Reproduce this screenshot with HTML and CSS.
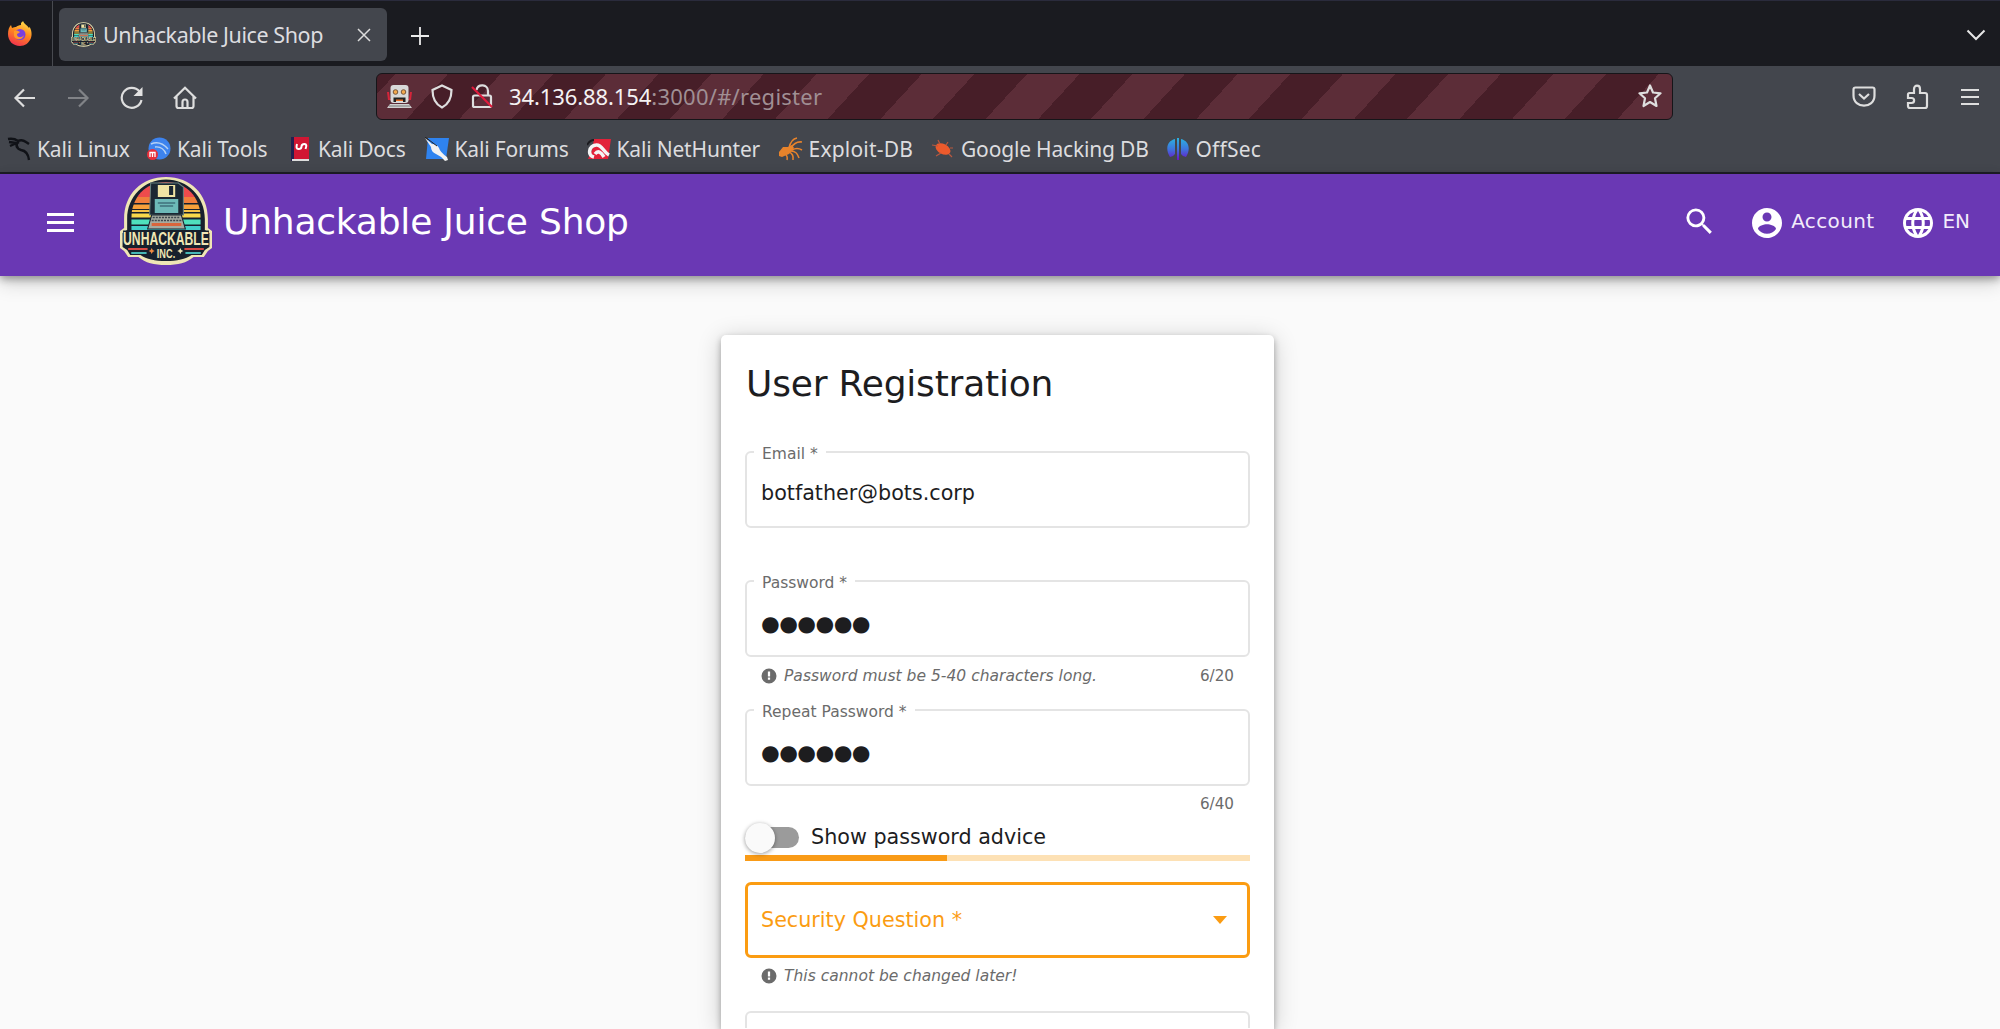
FILE: index.html
```html
<!DOCTYPE html>
<html lang="en">
<head>
<meta charset="utf-8">
<title>Unhackable Juice Shop</title>
<link rel="stylesheet" href="styles.css">
</head>
<body>
<svg width="0" height="0" class="defs">
  <defs>
    <linearGradient id="fox" x1="0.7" y1="0" x2="0.3" y2="1"><stop offset="0" stop-color="#ffe14d"/><stop offset=".45" stop-color="#ff8a1e"/><stop offset="1" stop-color="#f2304f"/></linearGradient>
    <linearGradient id="off" x1="0" y1="0" x2="0" y2="1"><stop offset="0" stop-color="#2bb3e0"/><stop offset=".5" stop-color="#3d76dd"/><stop offset="1" stop-color="#6a12c9"/></linearGradient>
    <clipPath id="dome"><path d="M11 64V42C11 20 25 5 45 5s34 15 34 37v22z"/></clipPath>
    <symbol id="logo" viewBox="0 0 90 88">
      <path d="M45 0C21 0 4 17 4 42v9l-4 3v17l4 3 4 6h10c7 6 15 8 27 8s20-2 27-8h10l4-6 4-3V54l-4-3v-9C86 17 69 0 45 0z" fill="#efe6b5"/>
      <path d="M45 2.500C24 2.500 7 19 7 42v11l-4.500 3v14l4.500 3 3 5h10c6 4 14 6 25 6s19-2 25-6h10l3-5 4.500-3V56L83 53V42C83 19 66 2.500 45 2.500z" fill="#17202d"/>
      <g clip-path="url(#dome)">
        <path d="M8 4h74v16H8z" fill="#ee4b4c"/><path d="M8 20h74v6H8z" fill="#f07f3c"/><path d="M8 27.500h74v4.500H8z" fill="#f6a03a"/><path d="M8 33h74v2H8z" fill="#f4c348"/><path d="M8 36.500h74v4H8z" fill="#f8d84b"/><path d="M8 42.500h74v5H8z" fill="#4fe0bd"/><path d="M8 49h74v4H8z" fill="#41cfca"/><path d="M8 54h74v8H8z" fill="#35b2cf"/>
      </g>
      <path d="M30 6h27l5 4v28H29z" fill="#1b2733" stroke="#68827f" stroke-width="1"/>
      <path d="M37 8h17v12H37z" fill="#efe3a4"/><path d="M48 9h4v9h-4z" fill="#1b2733"/>
      <path d="M34 22h23v14H34z" fill="#6db9b8"/><path d="M37 26h17M39 29h13" stroke="#284d5c"/>
      <path d="M31 38h29l4 14H27z" fill="#a5aaa0" stroke="#17202d"/><path d="M32 40.500h27M31 43.500h29" stroke="#3d474e" stroke-width="1.500" stroke-dasharray="2 1"/><path d="M31 47.500h29" stroke="#d9653c" stroke-width="3"/>
      <path d="M3 53.500h84v16H3z" fill="#17202d"/>
      <text class="logo-word" x="3" y="68.500" textLength="84" lengthAdjust="spacingAndGlyphs">UNHACKABLE</text>
      <path d="M8 72h19M63 72h19" stroke="#d94a45" stroke-width="2"/><path d="M11 76h15M64 76h15" stroke="#47b7b6" stroke-width="2"/>
      <path d="M31 71l1 2 2 1-2 1-1 2-1-2-2-1 2-1z" fill="#ef8a42"/><path d="M59 71l1 2 2 1-2 1-1 2-1-2-2-1 2-1z" fill="#efe6b5"/>
      <text class="logo-inc" x="36" y="81" textLength="18" lengthAdjust="spacingAndGlyphs">INC.</text>
    </symbol>
    <symbol id="info" viewBox="0 0 24 24"><path fill="currentColor" d="M12 2a10 10 0 100 20 10 10 0 000-20zm1.500 15h-3v-3h3zm0-4.500h-3V6h3z"/></symbol>
  </defs>
</svg>

<div class="tabs">
  <div class="pinned"><svg width="26" height="26" viewBox="0 0 26 26"><path d="M14 2c1-1 2-2 2-2 1 3 4 4 6 7 0 0 1-1 0-2 3 4 3 9 2 12-2 5-6 8-11 8C6 25 1 20 1 13 1 9 2 6 4 4l1 3c2-1 3-1 4-1 1-1 3-2 5-2z" fill="url(#fox)"/><circle cx="13" cy="13.500" r="5.500" fill="#7a3fe0"/><path d="M7 10c3-1 4 0 6 1 0 1-3 1-3 3 1 3 5 3 7 0-1 5-8 6-10 1z" fill="#ff9a2a"/></svg></div>
  <div class="tab">
    <svg width="25" height="25"><use href="#logo"/></svg>
    <span class="tab-title">Unhackable Juice Shop</span>
    <svg class="tab-close" width="14" height="14" viewBox="0 0 14 14"><path d="M1 1l12 12M13 1L1 13" stroke="#dcdcdc" stroke-width="1.500"/></svg>
  </div>
  <svg class="plus" width="18" height="18" viewBox="0 0 18 18"><path d="M9 0v18M0 9h18" stroke="#ececec" stroke-width="1.800"/></svg>
  <svg class="chev" width="20" height="12" viewBox="0 0 20 12"><path d="M1.500 1.500L10 10l8.500-8.500" fill="none" stroke="#e6e6e6" stroke-width="2"/></svg>
</div>

<div class="toolbar">
  <nav class="nav">
    <svg width="24" height="24" viewBox="0 0 24 24"><path d="M22 12H2M11 3.500L2.500 12l8.500 8.500" class="ln"/></svg>
    <svg class="dim" width="24" height="24" viewBox="0 0 24 24"><path d="M2 12h20M13 3.500l8.500 8.500-8.500 8.500" class="ln"/></svg>
    <svg width="24" height="24" viewBox="0 0 24 24"><path d="M21.500 14A10 10 0 1 1 19.500 5.500" class="ln"/><path d="M22.500 1v9h-9z" fill="#e2e2e2"/></svg>
    <svg width="24" height="24" viewBox="0 0 24 24"><path d="M1 12.500L12 1.800l11 10.700M3.500 10.500V20q0 2 2 2h13q2 0 2-2v-9.500M9.500 22v-6q0-2.500 2.500-2.500t2.500 2.500v6" class="ln"/></svg>
  </nav>
  <div class="urlbar">
    <svg width="25" height="25" viewBox="0 0 25 25"><path d="M0 8h2l1 7h19l1-7h2l-1 8H1z" fill="#d5253a"/><rect x="3.500" y="1" width="18" height="18" rx="3" fill="#d9d9d9"/><circle cx="8.500" cy="8" r="2.300" fill="#f3a84c" stroke="#77563a" stroke-width="1"/><circle cx="16.500" cy="8" r="2.300" fill="#f3a84c" stroke="#77563a" stroke-width="1"/><path d="M6.500 18v-4.500h12V18h-2.500v-2H9v2z" fill="#222"/><path d="M9 15.500h7v1.500H9z" fill="#e66b25"/><path d="M3 20h19l3 4H0z" fill="#d0d0d0"/><path d="M2 22h21" stroke="#777"/></svg>
    <svg width="22" height="25" viewBox="0 0 22 25"><path d="M11 1.500L20.500 6c0 8-2.500 14-9.500 17.500C4 20 1.500 14 1.500 6z" class="ln"/></svg>
    <svg width="22" height="25" viewBox="0 0 22 25"><path d="M3.500 11.500h15q1.500 0 1.500 1.500v8.500q0 1.500-1.500 1.500h-15q-1.500 0-1.500-1.500V13q0-1.500 1.500-1.500M17 11.500V7c0-7-10-7.500-11.500-1" class="ln"/><path d="M1 3l20 20" stroke="#e21b3c" stroke-width="2.200"/></svg>
    <span class="url"><span class="host">34.136.88.154</span><span class="path">:3000/#/register</span></span>
    <svg class="star" width="24" height="24" viewBox="0 0 24 24"><path d="M12 1.500l3 7 7.500.8-5.500 5 1.500 7.700-6.500-4-6.500 4L7 14.300l-5.500-5L9 8.500z" class="ln" stroke-linejoin="round"/></svg>
  </div>
  <div class="right-icons">
    <svg width="24" height="22" viewBox="0 0 24 22"><path d="M3.500 1.500h17q2 0 2 2v6c0 13.500-21 13.500-21 0v-6q0-2 2-2zM7 8l5 4.500L17 8" class="ln"/></svg>
    <svg width="24" height="26" viewBox="0 0 24 26"><path d="M3.500 9H8V5c0-4.500 6-4.500 6 0v4h5q2 0 2 2v11q0 2-2 2H4q-2 0-2-2v-3h3.500c3.500 0 3.500-5 0-5H2v-3.500q0-1.500 1.500-1.500" class="ln"/></svg>
    <svg width="20" height="18" viewBox="0 0 20 18"><path d="M1 2h18M1 9h18M1 16h18" class="ln"/></svg>
  </div>
</div>

<div class="bookmarks">
  <a><svg width="24" height="24" viewBox="0 0 24 24"><path d="M1 2q6-1 10 2 4-2 8 1l3 2M2 5l7 1M3 9l7-3q-2 5 4 7 7 1 8 10M12 5q-4 2-1 6" fill="none" stroke="#101217" stroke-width="2.400"/></svg><span>Kali Linux</span></a>
  <a><svg width="24" height="24" viewBox="0 0 24 24"><circle cx="12.500" cy="11.500" r="11" fill="#3d83ee"/><path d="M4 7q9-4 17 5M8 10q8-1 11 7" fill="none" stroke="#b6d2f5" stroke-width="1.400"/><circle cx="5.500" cy="17.500" r="5.500" fill="#e72f3b"/><path d="M3 20v-4.500h5V20M5.500 15.500V20" fill="none" stroke="#fff" stroke-width="1.300"/></svg><span>Kali Tools</span></a>
  <a><svg width="24" height="24" viewBox="0 0 24 24"><path d="M3 0h18v24H3z" fill="#d01633"/><path d="M3 0h3v24H3z" fill="#24204f"/><path d="M4 22h17v2H4z" fill="#ddd"/><path d="M9 7q-1.500 5 1.500 5t3-2.500 3-2.500 1 5" fill="none" stroke="#fff" stroke-width="2"/></svg><span>Kali Docs</span></a>
  <a><svg width="24" height="24" viewBox="0 0 24 24"><path d="M3 1h21l-3 21H1z" fill="#2f83ef"/><path d="M0 1l7 6q5 0 7 4 1 4 8 9l1 3-3 1q-4-5-9-7-5-2-5-7z" fill="#f2f2f2"/><path d="M0 0l12 9" stroke="#222"/></svg><span>Kali Forums</span></a>
  <a><svg width="24" height="24" viewBox="0 0 24 24"><path d="M7 2h17l-3 20H1l4-9z" fill="#e22139"/><path d="M7 20C0 18 2 9 9 8c6-1 7 7 13 10M8 17c3-4 6-2 9 3" fill="none" stroke="#f4f4f4" stroke-width="3.500"/><path d="M0 8q3-5 7-5" stroke="#1b1b1f" stroke-width="2" fill="none"/></svg><span>Kali NetHunter</span></a>
  <a class="wide"><svg width="24" height="24" viewBox="0 0 24 24"><path d="M0 15l4-5 5 0 4-2 2 3-5 6-7 3-3-1z" fill="#e8832b"/><path d="M10 11Q12 2 18 1M12 11q4-7 11-6M13 13q5-3 10 0M12 14q6 0 8 7M10 15q5 2 4 8M6 17q3 2 2 6" fill="none" stroke="#e8832b" stroke-width="1.500"/></svg><span>Exploit-DB</span></a>
  <a><svg width="24" height="24" viewBox="0 0 24 24"><ellipse cx="12" cy="12" rx="8" ry="5" fill="#ec5a2c" transform="rotate(28 12 12)"/><path d="M1 8l6 1M9 7L7 3M15 8l2-3M19 11h3M18 17l3 3M10 16l-5 3" stroke="#b9583f" stroke-width="1.200"/></svg><span>Google Hacking DB</span></a>
  <a class="wide"><svg width="24" height="24" viewBox="0 0 24 24"><path d="M9 2C1 4-1 12 4 20q3 0 5-3zM15 2c8 2 10 10 5 18q-3 0-5-3zM11 1h2v22h-2z" fill="url(#off)"/></svg><span>OffSec</span></a>
</div>

<header class="header">
  <svg class="menu" width="27" height="19" viewBox="0 0 27 19"><path d="M0 1.500h27M0 9.500h27M0 17.500h27" stroke="#fff" stroke-width="3"/></svg>
  <svg class="logo" width="92" height="88" viewBox="0 0 90 88" preserveAspectRatio="none"><use href="#logo" width="90" height="88"/></svg>
  <span class="brand">Unhackable Juice Shop</span>
  <svg class="search" width="35" height="35" viewBox="0 0 24 24"><path fill="#fff" d="M15.500 14h-.79l-.28-.27A6.471 6.471 0 0 0 16 9.500 6.500 6.500 0 1 0 9.500 16c1.610 0 3.090-.59 4.230-1.570l.27.28v.79l5 4.990L20.490 19l-4.990-5zm-6 0C7.010 14 5 11.990 5 9.500S7.010 5 9.500 5 14 7.010 14 9.500 11.990 14 9.500 14z"/></svg>
  <span class="action account"><svg width="36" height="36" viewBox="0 0 24 24"><path fill="#fff" d="M12 2C6.480 2 2 6.480 2 12s4.480 10 10 10 10-4.480 10-10S17.520 2 12 2zm0 3c1.660 0 3 1.340 3 3s-1.340 3-3 3-3-1.340-3-3 1.340-3 3-3zm0 14.200a7.200 7.200 0 0 1-6-3.220c.03-1.990 4-3.080 6-3.080 1.990 0 5.970 1.090 6 3.080a7.200 7.200 0 0 1-6 3.220z"/></svg><span>Account</span></span>
  <span class="action"><svg width="36" height="36" viewBox="0 0 24 24"><path fill="#fff" d="M11.990 2C6.470 2 2 6.480 2 12s4.470 10 9.990 10C17.520 22 22 17.520 22 12S17.520 2 11.990 2zm6.930 6h-2.950a15.650 15.650 0 0 0-1.380-3.560A8.030 8.030 0 0 1 18.920 8zM12 4.040c.83 1.200 1.480 2.530 1.910 3.960h-3.820c.43-1.430 1.080-2.760 1.910-3.960zM4.260 14C4.100 13.360 4 12.690 4 12s.1-1.360.26-2h3.380c-.08.66-.14 1.320-.14 2s.06 1.340.14 2H4.260zm.82 2h2.950c.32 1.250.78 2.450 1.380 3.560A7.987 7.987 0 0 1 5.080 16zm2.950-8H5.080a7.987 7.987 0 0 1 4.330-3.560A15.650 15.650 0 0 0 8.030 8zM12 19.960c-.83-1.200-1.480-2.530-1.910-3.960h3.820c-.43 1.430-1.080 2.760-1.910 3.960zM14.340 14H9.660c-.09-.66-.16-1.320-.16-2s.07-1.350.16-2h4.680c.09.65.16 1.320.16 2s-.07 1.340-.16 2zm.25 5.560c.6-1.110 1.060-2.310 1.380-3.560h2.950a8.030 8.030 0 0 1-4.330 3.560zM16.360 14c.08-.66.14-1.320.14-2s-.06-1.340-.14-2h3.380c.16.640.26 1.310.26 2s-.1 1.360-.26 2h-3.380z"/></svg><span class="lang">EN</span></span>
</header>

<main class="page">
  <section class="card">
    <h1>User Registration</h1>
    <div class="field"><label>Email *</label><span class="value">botfather@bots.corp</span></div>
    <div class="hint empty"></div>
    <div class="field"><label>Password *</label><span class="value dots">●●●●●●</span></div>
    <div class="hint"><svg width="18" height="18"><use href="#info"/></svg><em>Password must be 5-40 characters long.</em><span class="count">6/20</span></div>
    <div class="field"><label>Repeat Password *</label><span class="value dots">●●●●●●</span></div>
    <div class="hint short"><span class="count">6/40</span></div>
    <div class="toggle-row"><span class="toggle"><span class="thumb"></span></span><span class="toggle-label">Show password advice</span></div>
    <div class="strength"><div class="strength-fill"></div></div>
    <div class="field select"><span class="value">Security Question *</span><svg width="14" height="8" viewBox="0 0 14 8"><path d="M0 0h14L7 8z" fill="#fb9c12"/></svg></div>
    <div class="hint last"><svg width="18" height="18"><use href="#info"/></svg><em>This cannot be changed later!</em></div>
    <div class="field cut"></div>
  </section>
</main>
</body>
</html>
```
FILE: styles.css
```css
* { box-sizing: border-box; }
body {
  margin: 0;
  height: 1029px;
  overflow: hidden;
  background: #fafafa;
  font-family: "DejaVu Sans", sans-serif;
  color: #1d1d1f;
}
svg { display: block; flex: none; }
.defs { position: absolute; }
.ln { fill: none; stroke: #dedede; stroke-width: 2.2; }
.logo-word { font: bold 18px "Liberation Sans", sans-serif; fill: #efe6b5; }
.logo-inc { font: bold 12px "Liberation Sans", sans-serif; fill: #efe6b5; }

/* Browser tab strip */
.tabs {
  display: flex;
  align-items: center;
  height: 66px;
  background: #1a1b20;
  border-top: 1px solid #2a2b3c;
  font-family: "Noto Sans", sans-serif;
}
.pinned {
  display: flex;
  align-items: center;
  width: 53px;
  height: 100%;
  padding-left: 7px;
  border-right: 1px solid #484a50;
}
.tab {
  display: flex;
  align-items: center;
  width: 328px;
  height: 53px;
  margin: 2px 0 0 6px;
  padding: 0 16px 0 12px;
  border-radius: 6px;
  background: #43464d;
}
.tab-title { margin-left: 7px; font-size: 21.5px; letter-spacing: -.42px; color: #dddde0; white-space: nowrap; }
.tab-close { margin-left: auto; }
.plus { margin: 4px 0 0 24px; }
.chev { margin: 3px 14px 0 auto; }

/* Navigation toolbar */
.toolbar {
  display: flex;
  align-items: center;
  height: 60px;
  background: #43464d;
  font-family: "Noto Sans", sans-serif;
}
.nav { display: flex; gap: 29.3px; width: 376px; padding-left: 13px; padding-top: 3px; }
.dim { opacity: .4; }
.urlbar {
  display: flex;
  align-items: center;
  width: 1297px;
  height: 47px;
  padding: 0 10px 0 10px;
  border: 1px solid #161519;
  border-radius: 6px;
  background: repeating-linear-gradient(132.6deg, #471e28 0, #471e28 13.5px, #5c2d38 13.5px, #5c2d38 52.2px, #471e28 52.2px, #471e28 77.5px);
}
.urlbar svg + svg { margin-left: 18.5px; }
.url { margin-left: 16px; font-size: 22px; white-space: nowrap; }
.host { color: #f4f2f3; letter-spacing: -.1px; }
.path { color: #a08f94; letter-spacing: .25px; }
.urlbar .star { margin-left: auto; }
.right-icons { display: flex; align-items: center; margin-left: auto; gap: 30px; padding: 1px 20px 0 0; }

/* Bookmarks */
.bookmarks {
  display: grid;
  grid-template-columns: 140px 141px 136.5px 162px 192px 152.5px 234.5px 120px;
  align-items: center;
  height: 48px;
  padding: 0 0 0 7px;
  background: #43464d;
  border-bottom: 2px solid #1d1e26;
  font: 21px "Noto Sans", sans-serif;
  letter-spacing: -.18px;
  color: #dcdcdf;
  white-space: nowrap;
}
.bookmarks a { display: flex; align-items: center; gap: 6px; }
.bookmarks .wide { letter-spacing: .2px; }

/* Shop header */
.header {
  position: relative;
  display: flex;
  align-items: center;
  height: 102px;
  padding-right: 30px;
  background: #6a38b4;
  box-shadow: 0 3px 8px rgba(0, 0, 0, .35), 0 8px 18px rgba(0, 0, 0, .15);
  color: #fff;
}
.menu { margin: -5px 46px 0 47px; }
.logo { margin-top: -8px; }
.brand { margin: -7px 0 0 11px; font-size: 36px; letter-spacing: -.2px; white-space: nowrap; }
.search { margin: -8px 33px 0 auto; }
.action { display: flex; align-items: center; gap: 6px; margin-top: -8px; font-size: 20px; letter-spacing: .35px; color: #f3ecfb; }
.action svg { margin-top: 3px; }
.account { margin-right: 24px; }
.lang { letter-spacing: 0; }

/* Registration card */
.page { display: flex; justify-content: center; padding: 59px 5px 0 0; }
.card {
  width: 553px;
  height: 694px;
  padding: 24px 24px 0;
  border-radius: 5px 5px 0 0;
  background: #fff;
  box-shadow: 0 3px 6px rgba(0, 0, 0, .3), 0 4px 24px rgba(0, 0, 0, .2);
}
h1 { height: 92px; margin: 0; padding: 1px 0 0 1px; font-size: 36px; font-weight: 400; letter-spacing: -.2px; line-height: 48px; }
.field {
  position: relative;
  display: flex;
  align-items: center;
  height: 77px;
  padding: 6px 17px 0 14px;
  border: 2px solid #e4e4e4;
  border-radius: 6px;
}
.field label {
  position: absolute;
  top: -9px;
  left: 7px;
  padding: 0 8px;
  background: #fff;
  font-size: 15.5px;
  line-height: 20px;
  color: #6b6b6b;
}
.value { font-size: 20.7px; }
.value, em { white-space: nowrap; }
.dots { padding-top: 4px; font-size: 21.5px; letter-spacing: -.6px; }
.hint {
  display: flex;
  align-items: center;
  height: 52px;
  padding: 0 16px 15px 15px;
  font-size: 15.5px;
  color: #6b6b6b;
}
.hint em { margin-left: 6px; letter-spacing: .02px; }
.count { margin-left: auto; font-size: 15.2px; }
.hint.short { height: 36px; padding-bottom: 0; }
.hint.last { height: 53px; padding-bottom: 17px; }
.toggle-row { display: flex; align-items: center; gap: 12px; height: 31px; font-size: 20.7px; }
.toggle-label { margin-top: -1px; }
.toggle { width: 54px; height: 21px; border-radius: 11px; background: #9b9b9b; }
.thumb { display: block; width: 30px; height: 30px; margin-top: -4px; border-radius: 50%; background: #fafafa; box-shadow: 0 1px 4px rgba(0, 0, 0, .4); }
.strength { height: 6px; margin: 2px 0 21px; background: #fde1b5; }
.strength-fill { width: 40%; height: 100%; background: #f99b17; }
.select { justify-content: space-between; height: 76px; padding: 0 20px 1px 13px; border: 3px solid #fb9c12; color: #fb9c12; }
.cut { height: 17px; border-bottom: 0; border-radius: 6px 6px 0 0; }

.action.account { margin-left: -1px; }
.action:last-child { padding-right: 0; }
.account span { margin-right: 2px; }
```
